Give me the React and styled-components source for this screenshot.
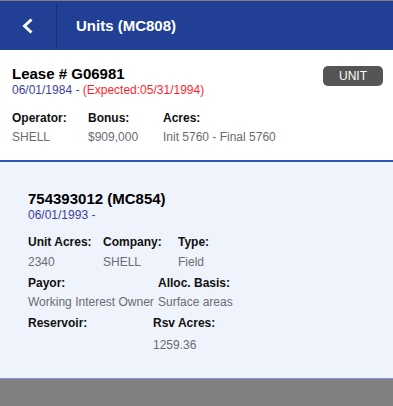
import React from "react";
import styled, { createGlobalStyle } from "styled-components";

const Global = createGlobalStyle`
  html, body { margin: 0; padding: 0; background: #808080; }
  body { font-family: "Liberation Sans", Arial, sans-serif; }
`;

const Page = styled.div`
  width: 393px;
  border-top: 1px solid #808080;
  background: #808080;
  min-height: 405px;
`;

const Header = styled.header`
  display: flex;
  align-items: center;
  height: 49px;
  background: #213f95;
`;

const BackButton = styled.div`
  width: 56px;
  height: 49px;
  display: flex;
  align-items: center;
  justify-content: center;
`;

const Divider = styled.div`
  width: 1px;
  height: 43px;
  background: #172e70;
`;

const Title = styled.h1`
  margin: 0 0 0 19px;
  color: #fff;
  font-size: 15px;
  font-weight: bold;
  line-height: 18px;
`;

const LeaseSection = styled.section`
  background: #fff;
  padding: 15px 12px 16px 12px;
  border-bottom: 2px solid #3355b3;
  position: relative;
`;

const Heading = styled.div`
  font-size: 15px;
  font-weight: bold;
  line-height: 18px;
  color: #000;
`;

const DateLine = styled.div`
  font-size: 12px;
  line-height: 14px;
  color: #3c3f9c;
`;

const Expected = styled.span`
  color: #ff1f2f;
`;

const Badge = styled.div`
  position: absolute;
  top: 16px;
  right: 10px;
  width: 60px;
  height: 20px;
  border-radius: 5px;
  background: #555555;
  color: #fff;
  font-size: 12px;
  line-height: 20px;
  text-align: center;
`;

const Row = styled.div`
  display: flex;
  margin-top: ${(p) => p.$gap}px;
`;

const Field = styled.div`
  width: ${(p) => p.$w}px;
  flex: none;
`;

const Label = styled.div`
  font-size: 12px;
  font-weight: bold;
  line-height: 14px;
  color: #111;
`;

const Value = styled.div`
  font-size: 12px;
  line-height: 14px;
  color: #6b6b73;
  margin-top: ${(p) => p.$gap ?? 5}px;
  min-height: 14px;
`;

const UnitSection = styled.section`
  background: #eff3fb;
  padding: 28px 16px 26px 28px;
  border-bottom: 1px solid #7a96d8;
`;

const Back = () => (
  <svg width="14" height="16" viewBox="0 0 14 16">
    <polyline
      points="10.5,1.5 3.5,8 10.5,14.5"
      fill="none"
      stroke="#fff"
      strokeWidth="3"
    />
  </svg>
);

export default function App() {
  return (
    <>
      <Global />
      <Page>
        <Header>
          <BackButton>
            <Back />
          </BackButton>
          <Divider />
          <Title>Units (MC808)</Title>
        </Header>
        <LeaseSection>
          <Heading>Lease # G06981</Heading>
          <DateLine>
            06/01/1984 - <Expected>(Expected:05/31/1994)</Expected>
          </DateLine>
          <Badge>UNIT</Badge>
          <Row $gap={14}>
            <Field $w={76}>
              <Label>Operator:</Label>
              <Value>SHELL</Value>
            </Field>
            <Field $w={75}>
              <Label>Bonus:</Label>
              <Value>$909,000</Value>
            </Field>
            <Field $w={150}>
              <Label>Acres:</Label>
              <Value>Init 5760 - Final 5760</Value>
            </Field>
          </Row>
        </LeaseSection>
        <UnitSection>
          <Heading>754393012 (MC854)</Heading>
          <DateLine>06/01/1993 -</DateLine>
          <Row $gap={13}>
            <Field $w={75}>
              <Label>Unit Acres:</Label>
              <Value $gap={6}>2340</Value>
            </Field>
            <Field $w={75}>
              <Label>Company:</Label>
              <Value $gap={6}>SHELL</Value>
            </Field>
            <Field $w={75}>
              <Label>Type:</Label>
              <Value $gap={6}>Field</Value>
            </Field>
          </Row>
          <Row $gap={7}>
            <Field $w={130}>
              <Label>Payor:</Label>
              <Value>Working Interest Owner</Value>
            </Field>
            <Field $w={150}>
              <Label>Alloc. Basis:</Label>
              <Value>Surface areas</Value>
            </Field>
          </Row>
          <Row $gap={7}>
            <Field $w={125}>
              <Label>Reservoir:</Label>
              <Value $gap={8}></Value>
            </Field>
            <Field $w={150}>
              <Label>Rsv Acres:</Label>
              <Value $gap={8}>1259.36</Value>
            </Field>
          </Row>
        </UnitSection>
      </Page>
    </>
  );
}
